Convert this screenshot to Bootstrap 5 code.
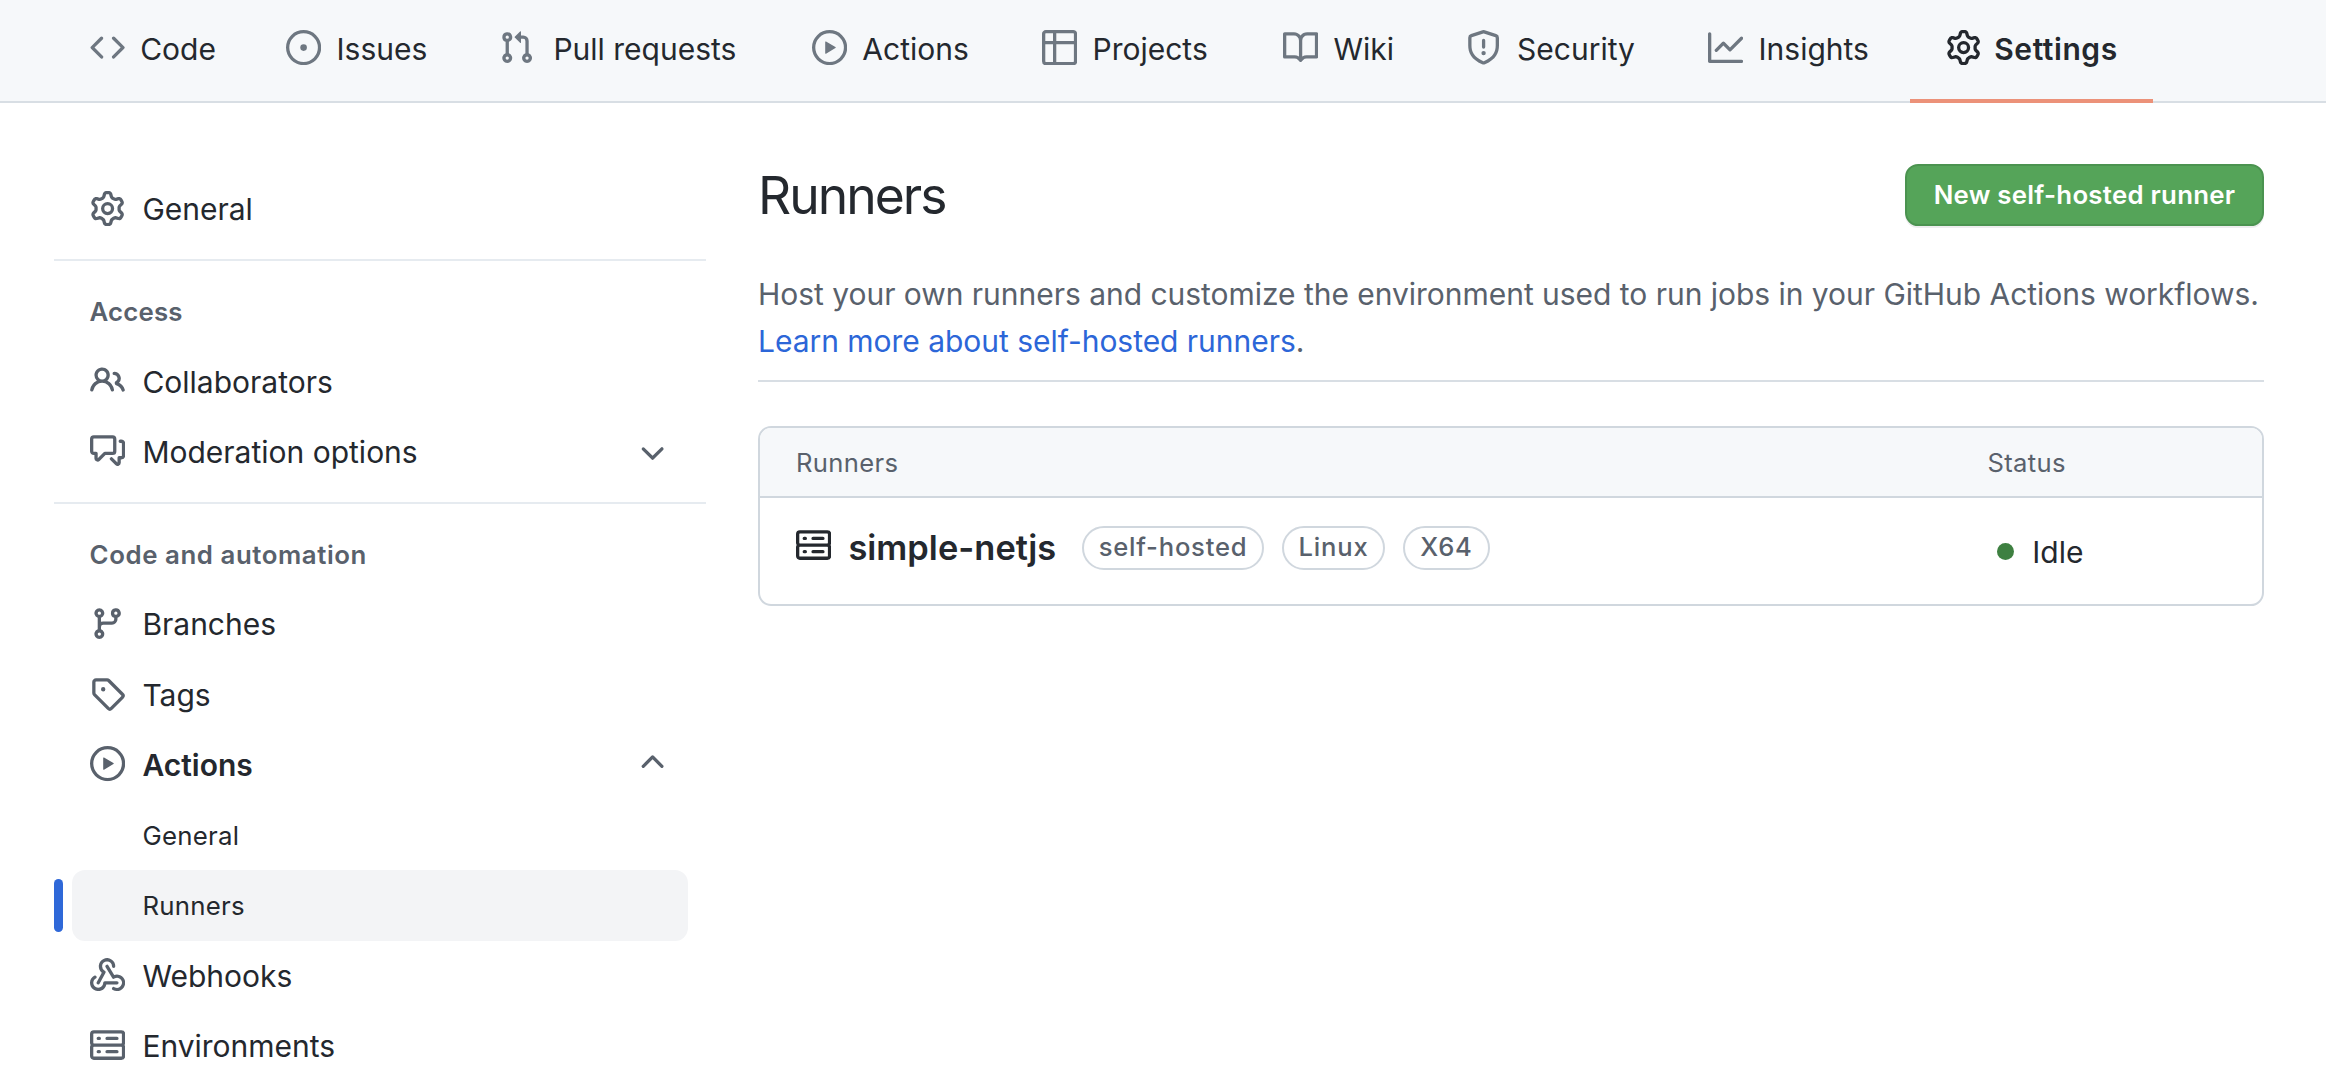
<!DOCTYPE html>
<html lang="en">
<head>
<meta charset="utf-8">
<meta name="viewport" content="width=device-width, initial-scale=1">
<title>Runners</title>
<link href="https://cdn.jsdelivr.net/npm/bootstrap@5.3.0/dist/css/bootstrap.min.css" rel="stylesheet">
<style>
body{font-family:Inter,"Liberation Sans",sans-serif;font-size:30px;line-height:46.2px;color:#24282e;background:#fff}
.page{height:1072px;overflow:hidden}
.oct{width:35.2px;height:35.2px;fill:currentColor;flex:none}
a{text-decoration:none}
/* repository tabs */
.repo-nav{background:#f6f8fa;border-bottom:2px solid #d8dee4;height:103px;padding-left:54.4px}
.repo-nav .nav-link{height:103px;padding:0 0 1px 35.2px;border-bottom:4px solid transparent;color:#24282e;white-space:nowrap;gap:15.4px}
.repo-nav .oct{color:#6e7781;margin-bottom:3px}
.repo-nav .active{font-weight:600;letter-spacing:.55px;border-color:#ec9279;gap:13.6px}
.repo-nav .active .oct{color:#24282e}
.w-code{width:196.4px}.w-issues{width:212.9px}.w-pulls{width:312.9px}.w-actions{width:230.2px}.w-projects{width:241px}
.w-wiki{width:183.5px}.w-security{width:241.5px}.w-insights{width:237.6px}.w-settings{width:243px}
/* settings menu */
.side{width:652px;margin-left:54px;padding-top:71px}
.side-group{border-top:2px solid #e6ebf0;margin-top:15.2px;padding-top:15.5px}
.side-title{height:69.5px;padding:1px 0 0 35.6px;font-size:25.8px;font-weight:600;color:#59616c;letter-spacing:.58px}
.side-title.tight{letter-spacing:.15px}
.side-item{height:70.3px;margin:0 18px;padding:0 17.6px;gap:17.6px;color:#24282e;border-radius:13.2px}
.side-item .oct{color:#59616c;margin-bottom:2px}
.side-item .oct.down{margin-bottom:0}
.side-sub{padding:1px 0 0 70.4px;font-size:25.8px;letter-spacing:.25px}
.side-now{background:#f3f4f6}
.side-now::before{content:"";position:absolute;left:-18px;top:9px;width:9px;height:53px;border-radius:5px;background:#2f68d8}
/* content */
.content{width:1506px;margin-left:52px;padding-top:61px}
.head{height:62px;margin-bottom:45.4px}
.head h1{font-size:51.6px;font-weight:400;letter-spacing:-2px;line-height:62px}
.btn-new{width:359px;height:62px;padding:1px 0 0;font-size:25.8px;font-weight:600;letter-spacing:.27px;color:#fff;background:#55a459;border:2px solid #4b9350;border-radius:13.2px;box-shadow:0 2px 0 rgba(27,31,36,.08)}
.intro{color:#59616c;padding-bottom:16.6px;border-bottom:2px solid #d8dee4;margin-bottom:44px;letter-spacing:-.03px;white-space:nowrap}
.intro a{color:#2c66d8}
.runner-box{border:2px solid #d0d7de;border-radius:13.2px}
.runner-head{height:70px;background:#f6f8fa;border-bottom:2px solid #d0d7de;border-radius:11px 11px 0 0;padding:1px 0 0 36px;font-size:25.6px;color:#59616c;letter-spacing:.35px}
.runner-row{height:106px;padding:27px 0 0 36px}
.col-status{width:274.5px}
.runner-name{font-size:34.4px;font-weight:600;margin:0 25.8px 0 17.2px;padding-top:1px;line-height:44px;letter-spacing:.04px}
.tagpill{height:44px;border:2px solid #d0d7de;border-radius:22px;font-size:25.6px;font-weight:500;letter-spacing:.78px;color:#59616c;margin-right:18px;padding-bottom:1px}
.p1{width:182px}.p2{width:103px}.p3{width:87px}
.runner-row .oct{margin-bottom:5px}
.dot{width:17.6px;height:17.6px;background:#3e8041;margin:0 18.2px 2px 9px}
</style>
<script src="https://cdn.jsdelivr.net/npm/bootstrap@5.3.0/dist/js/bootstrap.bundle.min.js"></script>
</head>
<body>
<svg class="d-none" xmlns="http://www.w3.org/2000/svg">
<symbol id="code" viewBox="0 0 16 16"><path d="M4.72 3.22a.75.75 0 011.06 1.06L2.06 8l3.72 3.72a.75.75 0 11-1.06 1.06L.47 8.53a.75.75 0 010-1.06l4.25-4.25zm6.56 0a.75.75 0 10-1.06 1.06L13.94 8l-3.72 3.72a.75.75 0 101.06 1.06l4.25-4.25a.75.75 0 000-1.06l-4.25-4.25z"/></symbol>
<symbol id="issue" viewBox="0 0 16 16"><path d="M8 9.5a1.5 1.5 0 100-3 1.5 1.5 0 000 3z"/><path fill-rule="evenodd" d="M8 0a8 8 0 100 16A8 8 0 008 0zM1.5 8a6.5 6.5 0 1113 0 6.5 6.5 0 01-13 0z"/></symbol>
<symbol id="pull" viewBox="0 0 16 16"><path fill-rule="evenodd" d="M7.177 3.073L9.573.677A.25.25 0 0110 .854v4.792a.25.25 0 01-.427.177L7.177 3.427a.25.25 0 010-.354zM3.75 2.5a.75.75 0 100 1.5.75.75 0 000-1.5zm-2.25.75a2.25 2.25 0 113 2.122v5.256a2.251 2.251 0 11-1.5 0V5.372A2.25 2.25 0 011.5 3.25zM11 2.5h-1V4h1a1 1 0 011 1v5.628a2.251 2.251 0 101.5 0V5A2.5 2.5 0 0011 2.5zm1 10.25a.75.75 0 111.5 0 .75.75 0 01-1.5 0zM3.75 12a.75.75 0 100 1.5.75.75 0 000-1.5z"/></symbol>
<symbol id="play" viewBox="0 0 16 16"><path fill-rule="evenodd" d="M1.5 8a6.5 6.5 0 1113 0 6.5 6.5 0 01-13 0zM8 0a8 8 0 100 16A8 8 0 008 0zM6.379 5.227A.25.25 0 006 5.442v5.117a.25.25 0 00.379.214l4.264-2.559a.25.25 0 000-.428L6.379 5.227z"/></symbol>
<symbol id="table" viewBox="0 0 16 16"><path fill-rule="evenodd" d="M0 1.75C0 .784.784 0 1.75 0h12.5C15.216 0 16 .784 16 1.75v12.5A1.75 1.75 0 0114.25 16H1.75A1.75 1.75 0 010 14.25V1.75zM1.5 6.5v7.75c0 .138.112.25.25.25H5v-8H1.5zM5 5H1.5V1.75a.25.25 0 01.25-.25H5V5zm1.5 1.5v8h7.75a.25.25 0 00.25-.25V6.5h-8zm8-1.5h-8V1.5h7.75a.25.25 0 01.25.25V5z"/></symbol>
<symbol id="book" viewBox="0 0 16 16"><path fill-rule="evenodd" d="M0 1.75A.75.75 0 01.75 1h4.253c1.227 0 2.317.59 3 1.501A3.744 3.744 0 0111.006 1h4.245a.75.75 0 01.75.75v10.5a.75.75 0 01-.75.75h-4.507a2.25 2.25 0 00-1.591.659l-.622.621a.75.75 0 01-1.06 0l-.622-.621A2.25 2.25 0 005.258 13H.75a.75.75 0 01-.75-.75V1.75zm8.755 3a2.25 2.25 0 012.25-2.25H14.5v9h-3.757c-.71 0-1.4.201-1.992.572l.004-7.322zm-1.504 7.324l.004-5.073-.002-2.253A2.25 2.25 0 005.003 2.5H1.5v9h3.757a3.75 3.75 0 011.994.574z"/></symbol>
<symbol id="shield" viewBox="0 0 16 16"><path fill-rule="evenodd" d="M7.467.133a1.75 1.75 0 011.066 0l5.25 1.68A1.75 1.75 0 0115 3.48V7c0 1.566-.32 3.182-1.303 4.682-.983 1.498-2.585 2.813-5.032 3.855a1.7 1.7 0 01-1.33 0c-2.447-1.042-4.049-2.357-5.032-3.855C1.32 10.182 1 8.566 1 7V3.48a1.75 1.75 0 011.217-1.667l5.25-1.68zm.61 1.429a.25.25 0 00-.153 0l-5.25 1.68a.25.25 0 00-.174.238V7c0 1.358.275 2.666 1.057 3.86.784 1.194 2.121 2.34 4.366 3.297a.2.2 0 00.154 0c2.245-.956 3.582-2.104 4.366-3.298C13.225 9.666 13.5 8.36 13.5 7V3.48a.25.25 0 00-.174-.237l-5.25-1.68zM9 10.5a1 1 0 11-2 0 1 1 0 012 0zm-.25-5.75a.75.75 0 10-1.5 0v3a.75.75 0 001.5 0v-3z"/></symbol>
<symbol id="graph" viewBox="0 0 16 16"><path fill-rule="evenodd" d="M1.5 1.75a.75.75 0 00-1.5 0v12.5c0 .414.336.75.75.75h14.5a.75.75 0 000-1.5H1.5V1.75zm14.28 2.53a.75.75 0 00-1.06-1.06L10 7.94 7.53 5.47a.75.75 0 00-1.06 0L3.22 8.72a.75.75 0 001.06 1.06L7 7.06l2.47 2.47a.75.75 0 001.06 0l5.25-5.25z"/></symbol>
<symbol id="gear" viewBox="0 0 16 16"><path fill-rule="evenodd" d="M7.429 1.525a6.593 6.593 0 011.142 0c.036.003.108.036.137.146l.289 1.105c.147.56.55.967.997 1.189.174.086.341.183.501.29.417.278.97.423 1.53.27l1.102-.303c.11-.03.175.016.195.046.219.31.41.641.573.989.014.031.022.11-.059.19l-.815.806c-.411.406-.562.957-.53 1.456a4.588 4.588 0 010 .582c-.032.499.119 1.05.53 1.456l.815.806c.08.08.073.159.059.19a6.494 6.494 0 01-.573.99c-.02.029-.086.074-.195.045l-1.103-.303c-.559-.153-1.112-.008-1.529.27-.16.107-.327.204-.5.29-.449.222-.851.628-.998 1.189l-.289 1.105c-.029.11-.101.143-.137.146a6.613 6.613 0 01-1.142 0c-.036-.003-.108-.037-.137-.146l-.289-1.105c-.147-.56-.55-.967-.997-1.189a4.502 4.502 0 01-.501-.29c-.417-.278-.97-.423-1.53-.27l-1.102.303c-.11.03-.175-.016-.195-.046a6.492 6.492 0 01-.573-.989c-.014-.031-.022-.11.059-.19l.815-.806c.411-.406.562-.957.53-1.456a4.587 4.587 0 010-.582c.032-.499-.119-1.05-.53-1.456l-.815-.806c-.08-.08-.073-.159-.059-.19a6.44 6.44 0 01.573-.99c.02-.029.086-.075.195-.045l1.103.303c.559.153 1.112.008 1.529-.27.16-.107.327-.204.5-.29.449-.222.851-.628.998-1.189l.289-1.105c.029-.11.101-.143.137-.146zM8 0c-.236 0-.47.01-.701.03-.743.065-1.29.615-1.458 1.261l-.29 1.106c-.017.066-.078.158-.211.224a5.994 5.994 0 00-.668.386c-.123.082-.233.09-.3.071L3.27 2.776c-.644-.177-1.392.02-1.82.63a7.977 7.977 0 00-.704 1.217c-.315.675-.111 1.422.363 1.891l.815.806c.05.048.098.147.088.294a6.084 6.084 0 000 .772c.01.147-.038.246-.088.294l-.815.806c-.474.469-.678 1.216-.363 1.891.2.428.436.835.704 1.218.428.609 1.176.806 1.82.63l1.103-.303c.066-.019.176-.011.299.071.213.143.436.272.668.386.133.066.194.158.212.224l.289 1.106c.169.646.715 1.196 1.458 1.26a8.094 8.094 0 001.402 0c.743-.064 1.29-.614 1.458-1.26l.29-1.106c.017-.066.078-.158.211-.224a5.98 5.98 0 00.668-.386c.123-.082.233-.09.3-.071l1.102.302c.644.177 1.392-.02 1.82-.63.268-.382.505-.789.704-1.217.315-.675.111-1.422-.364-1.891l-.814-.806c-.05-.048-.098-.147-.088-.294a6.1 6.1 0 000-.772c-.01-.147.039-.246.088-.294l.814-.806c.475-.469.679-1.216.364-1.891a7.992 7.992 0 00-.704-1.218c-.428-.609-1.176-.806-1.82-.63l-1.103.303c-.066.019-.176.011-.299-.071a5.991 5.991 0 00-.668-.386c-.133-.066-.194-.158-.212-.224L10.16 1.29C9.99.645 9.444.095 8.701.031A8.094 8.094 0 008 0zm1.5 8a1.5 1.5 0 11-3 0 1.5 1.5 0 013 0zM11 8a3 3 0 11-6 0 3 3 0 016 0z"/></symbol>
<symbol id="people" viewBox="0 0 16 16"><path fill-rule="evenodd" d="M5.5 3.5a2 2 0 100 4 2 2 0 000-4zM2 5.5a3.5 3.5 0 115.898 2.549 5.507 5.507 0 013.034 4.084.75.75 0 11-1.482.235 4.001 4.001 0 00-7.9 0 .75.75 0 01-1.482-.236A5.507 5.507 0 013.102 8.05 3.49 3.49 0 012 5.5zM11 4a.75.75 0 100 1.5 1.5 1.5 0 01.666 2.844.75.75 0 00-.416.672v.352a.75.75 0 00.574.73c1.2.289 2.162 1.2 2.522 2.372a.75.75 0 101.434-.44 5.01 5.01 0 00-2.56-3.012A3 3 0 0011 4z"/></symbol>
<symbol id="talk" viewBox="0 0 16 16"><path fill-rule="evenodd" d="M1.5 2.75a.25.25 0 01.25-.25h8.5a.25.25 0 01.25.25v5.5a.25.25 0 01-.25.25h-3.5a.75.75 0 00-.53.22L3.5 11.44V9.25a.75.75 0 00-.75-.75h-1a.25.25 0 01-.25-.25v-5.5zM1.75 1A1.75 1.75 0 000 2.75v5.5C0 9.216.784 10 1.75 10H2v1.543a1.457 1.457 0 002.487 1.03L7.061 10h3.189A1.75 1.75 0 0012 8.25v-5.5A1.75 1.75 0 0010.25 1h-8.5zM14.5 4.75a.25.25 0 00-.25-.25h-.5a.75.75 0 110-1.5h.5c.966 0 1.75.784 1.75 1.75v5.5A1.75 1.75 0 0114.25 12H14v1.543a1.457 1.457 0 01-2.487 1.03L9.22 12.28a.75.75 0 111.06-1.06l2.22 2.22v-2.19a.75.75 0 01.75-.75h1a.25.25 0 00.25-.25v-5.5z"/></symbol>
<symbol id="branch" viewBox="0 0 16 16"><path fill-rule="evenodd" d="M11.75 2.5a.75.75 0 100 1.5.75.75 0 000-1.5zm-2.25.75a2.25 2.25 0 113 2.122V6A2.5 2.5 0 0110 8.5H6a1 1 0 00-1 1v1.128a2.251 2.251 0 11-1.5 0V5.372a2.25 2.25 0 111.5 0v1.836A2.492 2.492 0 016 7h4a1 1 0 001-1v-.628A2.25 2.25 0 019.5 3.25zM4.25 12a.75.75 0 100 1.5.75.75 0 000-1.5zM3.5 3.25a.75.75 0 111.5 0 .75.75 0 01-1.5 0z"/></symbol>
<symbol id="tag" viewBox="0 0 16 16"><path fill-rule="evenodd" d="M2.5 7.775V2.75a.25.25 0 01.25-.25h5.025a.25.25 0 01.177.073l6.25 6.25a.25.25 0 010 .354l-5.025 5.025a.25.25 0 01-.354 0l-6.25-6.25a.25.25 0 01-.073-.177zm-1.5 0V2.75C1 1.784 1.784 1 2.75 1h5.025c.464 0 .91.184 1.238.513l6.25 6.25a1.75 1.75 0 010 2.474l-5.026 5.026a1.75 1.75 0 01-2.474 0l-6.25-6.25A1.75 1.75 0 011 7.775zM6 5a1 1 0 100 2 1 1 0 000-2z"/></symbol>
<symbol id="hook" viewBox="0 0 16 16"><path fill-rule="evenodd" d="M5.5 4.25a2.25 2.25 0 014.5 0 .75.75 0 001.5 0 3.75 3.75 0 10-6.14 2.889l-2.272 4.258a.75.75 0 001.324.706L7 7.25a.75.75 0 00-.309-1.015A2.25 2.25 0 015.5 4.25z"/><path d="M7.364 3.607a.75.75 0 011.03.257l2.608 4.349a3.75 3.75 0 11-.628 6.785.75.75 0 01.752-1.299 2.25 2.25 0 10-.033-3.88.75.75 0 01-1.03-.256L7.107 4.636a.75.75 0 01.257-1.03z"/><path d="M2.9 8.776A.75.75 0 012.625 9.8 2.25 2.25 0 106 11.75a.75.75 0 01.75-.751h5.5a.75.75 0 010 1.5H7.425a3.751 3.751 0 11-5.55-3.998.75.75 0 011.024.274z"/></symbol>
<symbol id="server" viewBox="0 0 16 16"><path fill-rule="evenodd" d="M1.75 1A1.75 1.75 0 000 2.75v4c0 .372.116.717.314 1a1.742 1.742 0 00-.314 1v4c0 .966.784 1.75 1.75 1.75h12.5A1.75 1.75 0 0016 12.75v-4c0-.372-.116-.717-.314-1 .198-.283.314-.628.314-1v-4A1.75 1.75 0 0014.25 1H1.75zm0 7.5a.25.25 0 00-.25.25v4c0 .138.112.25.25.25h12.5a.25.25 0 00.25-.25v-4a.25.25 0 00-.25-.25H1.75zM1.5 2.75a.25.25 0 01.25-.25h12.5a.25.25 0 01.25.25v4a.25.25 0 01-.25.25H1.75a.25.25 0 01-.25-.25v-4zm5.5 2A.75.75 0 017.75 4h4.5a.75.75 0 010 1.5h-4.5A.75.75 0 017 4.75zM7.75 10a.75.75 0 000 1.5h4.5a.75.75 0 000-1.5h-4.5zM3 4.75A.75.75 0 013.75 4h.5a.75.75 0 010 1.5h-.5A.75.75 0 013 4.75zM3.75 10a.75.75 0 000 1.5h.5a.75.75 0 000-1.5h-.5z"/></symbol>
<symbol id="down" viewBox="0 0 16 16"><path d="M12.78 6.22a.75.75 0 010 1.06l-4.25 4.25a.75.75 0 01-1.06 0L3.22 7.28a.75.75 0 011.06-1.06L8 9.94l3.72-3.72a.75.75 0 011.06 0z"/></symbol>
<symbol id="up" viewBox="0 0 16 16"><path d="M3.22 9.78a.75.75 0 010-1.06l4.25-4.25a.75.75 0 011.06 0l4.25 4.25a.75.75 0 01-1.06 1.06L8 6.06 4.28 9.78a.75.75 0 01-1.06 0z"/></symbol>
</svg>
<div class="page">
<nav class="repo-nav nav flex-nowrap">
<a class="nav-link d-flex align-items-center w-code" href="#"><svg class="oct"><use href="#code"/></svg>Code</a>
<a class="nav-link d-flex align-items-center w-issues" href="#"><svg class="oct"><use href="#issue"/></svg>Issues</a>
<a class="nav-link d-flex align-items-center w-pulls" href="#"><svg class="oct"><use href="#pull"/></svg><span class="ps-1">Pull requests</span></a>
<a class="nav-link d-flex align-items-center w-actions" href="#"><svg class="oct"><use href="#play"/></svg>Actions</a>
<a class="nav-link d-flex align-items-center w-projects" href="#"><svg class="oct"><use href="#table"/></svg>Projects</a>
<a class="nav-link d-flex align-items-center w-wiki" href="#"><svg class="oct"><use href="#book"/></svg>Wiki</a>
<a class="nav-link d-flex align-items-center w-security" href="#"><svg class="oct"><use href="#shield"/></svg>Security</a>
<a class="nav-link d-flex align-items-center w-insights" href="#"><svg class="oct"><use href="#graph"/></svg>Insights</a>
<a class="nav-link d-flex align-items-center active w-settings" href="#"><svg class="oct"><use href="#gear"/></svg>Settings</a>
</nav>
<div class="d-flex">
<aside class="side flex-shrink-0">
<a class="side-item d-flex align-items-center" href="#"><svg class="oct"><use href="#gear"/></svg>General</a>
<div class="side-group">
<div class="side-title tight d-flex align-items-center">Access</div>
<a class="side-item d-flex align-items-center" href="#"><svg class="oct"><use href="#people"/></svg>Collaborators</a>
<a class="side-item d-flex align-items-center" href="#"><svg class="oct"><use href="#talk"/></svg>Moderation options<svg class="oct down ms-auto"><use href="#down"/></svg></a>
</div>
<div class="side-group">
<div class="side-title d-flex align-items-center">Code and automation</div>
<a class="side-item d-flex align-items-center" href="#"><svg class="oct"><use href="#branch"/></svg>Branches</a>
<a class="side-item d-flex align-items-center" href="#"><svg class="oct"><use href="#tag"/></svg>Tags</a>
<a class="side-item d-flex align-items-center fw-semibold" href="#"><svg class="oct"><use href="#play"/></svg>Actions<svg class="oct ms-auto"><use href="#up"/></svg></a>
<a class="side-item side-sub d-flex align-items-center" href="#">General</a>
<a class="side-item side-sub side-now position-relative d-flex align-items-center" href="#">Runners</a>
<a class="side-item d-flex align-items-center" href="#"><svg class="oct"><use href="#hook"/></svg>Webhooks</a>
<a class="side-item d-flex align-items-center" href="#"><svg class="oct"><use href="#server"/></svg>Environments</a>
</div>
</aside>
<main class="content flex-shrink-0">
<div class="head d-flex justify-content-between align-items-center"><h1 class="m-0">Runners</h1><button class="btn btn-new" type="button">New self-hosted runner</button></div>
<p class="intro">Host your own runners and customize the environment used to run jobs in your GitHub Actions workflows.<br><a href="#">Learn more about self-hosted runners</a>.</p>
<div class="runner-box">
<div class="runner-head d-flex align-items-center"><span class="flex-grow-1">Runners</span><span class="col-status">Status</span></div>
<div class="runner-row d-flex align-items-start">
<div class="d-flex align-items-center flex-grow-1"><svg class="oct"><use href="#server"/></svg><span class="runner-name">simple-netjs</span>
<span class="tagpill p1 d-flex align-items-center justify-content-center">self-hosted</span><span class="tagpill p2 d-flex align-items-center justify-content-center">Linux</span><span class="tagpill p3 d-flex align-items-center justify-content-center">X64</span></div>
<div class="col-status d-flex align-items-center pt-1"><span class="dot rounded-circle"></span>Idle</div>
</div>
</div>
</main>
</div>
</div>
</body>
</html>
